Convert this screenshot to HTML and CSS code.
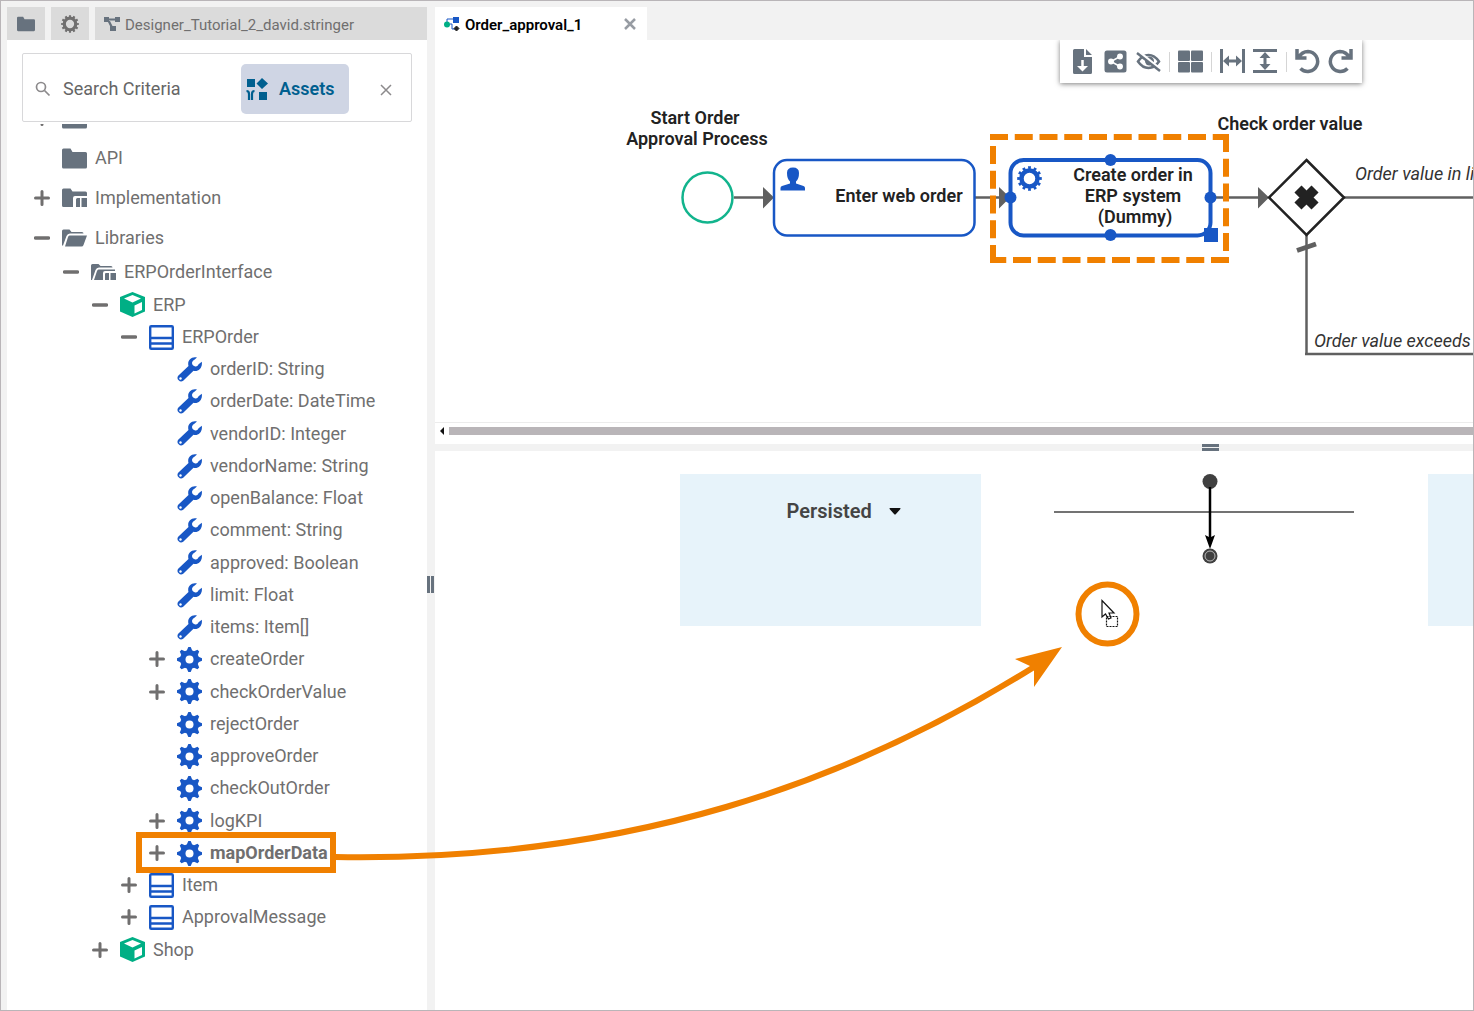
FILE: index.html
```
<!DOCTYPE html>
<html lang="en">
<head>
    <meta charset="UTF-8">
    <meta name="viewport" content="width=device-width, initial-scale=1.0">
    <title>Order_approval_1 - Designer</title>
    <link rel="stylesheet" href="styles.css">
</head>
<body>
    <!-- Shared icons -->
    <svg class="sprite" aria-hidden="true">
        <symbol id="i-plus" viewBox="0 0 16 16"><path d="M8 1.500v13M1.500 8h13" stroke="currentColor" stroke-width="3" stroke-linecap="round"/></symbol>
        <symbol id="i-minus" viewBox="0 0 16 16"><path d="M1.500 8h13" stroke="currentColor" stroke-width="3.500" stroke-linecap="round"/></symbol>
        <symbol id="i-folder" viewBox="0 0 25 25"><path d="M0 4q0-1.500 1.500-1.500h7l2 3.500H23.500q1.500 0 1.500 1.500V21q0 1.500-1.500 1.500h-22Q0 22.500 0 21z" fill="currentColor"/></symbol>
        <symbol id="i-package" viewBox="0 0 25 25">
            <path d="M0 4q0-1.500 1.500-1.500h7l2 3H23.500q1.500 0 1.500 1.500v3H13q-2 0-2 2v9H1.500Q0 21 0 19.500z" fill="currentColor"/>
            <path d="M14 13.500q0-1.500 1.500-1.500H18v9h-4zM19.500 12H25v9h-5.500z" fill="currentColor"/>
        </symbol>
        <symbol id="i-folder-open" viewBox="0 0 25 25">
            <path d="M0 5q0-1.500 1.500-1.500h6l2 2.500H20q1.500 0 1.500 1.500H8Q5.500 7.500 4.500 10L1 19.500H0z" fill="currentColor"/>
            <path d="M7.500 9.500H25L21.500 19q-.5 1.500-2 1.500H3L6 11q.5-1.500 1.500-1.500z" fill="currentColor"/>
        </symbol>
        <symbol id="i-package-open" viewBox="0 0 25 25">
            <path d="M0 5.500Q0 4 1.500 4h6l2 2H20q1.500 0 1.500 1.500H8Q5.500 7.500 4.500 10L1 20H0z" fill="currentColor"/>
            <path d="M7.500 9.500H24V11H14q-2 0-2 2v7H3L6 11q.5-1.500 1.500-1.500z" fill="currentColor"/>
            <path d="M14 14q0-1 1-1h3v7h-4zM19.500 13H25v7h-5.500z" fill="currentColor"/>
        </symbol>
        <symbol id="i-cube" viewBox="0 0 25 25">
            <path d="M12.500 0 25 5v14.500l-12.500 5.500L0 19.500V5z" fill="#00af85"/>
            <path d="M12.500 3 21 6.500l-8.500 4L4 6.500zM22 10v8l-7.500 3.500v-8z" fill="#fff"/>
        </symbol>
        <symbol id="i-class" viewBox="0 0 25 25">
            <rect x="1.200" y="1.200" width="22.600" height="22.600" rx="1" fill="#fff" stroke="currentColor" stroke-width="2.400"/>
            <path d="M1 13h23M1 18.500h23" stroke="currentColor" stroke-width="2.400"/>
        </symbol>
        <symbol id="i-wrench" viewBox="0 0 25 25">
            <path d="M20 .5C14-1 10 4 11.500 9L1.200 18.800a3.600 3.600 0 0 0 5 5L16.500 13.800C21 15 25.800 11 24.800 4.800l-3.200 2.500a3.400 3.400 0 1 1-4.200-4.500z" fill="currentColor"/>
            <circle cx="3.500" cy="21.500" r="1.200" fill="#fff"/>
        </symbol>
        <symbol id="i-cog" viewBox="0 0 25 25">
            <g fill="currentColor">
                <path id="cog-bar" d="M11.300 0h2.400l1.700 4v17l-1.700 4h-2.400l-1.700-4V4z"/>
                <use href="#cog-bar" transform="rotate(45 12.500 12.500)"/>
                <use href="#cog-bar" transform="rotate(90 12.500 12.500)"/>
                <use href="#cog-bar" transform="rotate(135 12.500 12.500)"/>
                <circle cx="12.500" cy="12.500" r="9.500"/>
            </g>
            <circle cx="12.500" cy="12.500" r="4" fill="#fff"/>
        </symbol>
        <symbol id="i-gear" viewBox="0 0 25 25">
            <g fill="none" stroke="currentColor">
                <circle cx="12.500" cy="12.500" r="8" stroke-width="4.500"/>
                <circle cx="12.500" cy="12.500" r="10.800" stroke-width="3" pathLength="24" stroke-dasharray="1 1" stroke-dashoffset=".5"/>
            </g>
        </symbol>
    </svg>

    <div class="app">
        <aside class="sidebar">
            <div class="side-tabs">
                <button class="side-tab square" aria-label="Files"><svg width="18" height="18"><use href="#i-folder"/></svg></button>
                <button class="side-tab square warm" aria-label="Settings"><svg width="18" height="18"><use href="#i-gear"/></svg></button>
                <button class="side-tab wide">
                    <svg width="16" height="16" viewBox="0 0 16 16"><path d="M0 1h5v5H0zM11 1h5v5h-5zM6 10h6v5H6zM5 2.500h6v2H5zM3.500 5h2.500l3 6H6.500z" fill="#67727e"/></svg>
                    <span class="tab-text">Designer_Tutorial_2_david.stringer</span>
                </button>
            </div>

            <div class="explorer">
                <form class="search">
                    <svg class="search-icon" width="16" height="16" viewBox="0 0 16 16" fill="none" stroke="#8c8a8c" stroke-width="1.700"><circle cx="6" cy="6" r="4.500"/><path d="m9.500 9.500 5 5"/></svg>
                    <input class="search-input" type="text" aria-label="Search Criteria" placeholder="Search Criteria">
                    <button class="chip" type="button">
                        <svg width="22" height="22" viewBox="0 0 22 22" fill="currentColor"><path d="M1 1h8v8H1zM16 0l6 5.500-6 5.500-5.500-5.500zM13 14h8v8h-8z"/><path d="M.5 13q2.500 0 2.500 3v6M8.500 13Q6 13 6 16v6" fill="none" stroke="currentColor" stroke-width="2.200"/></svg>
                        <span>Assets</span>
                    </button>
                    <button class="clear" type="reset" aria-label="Clear"><svg width="12" height="12" viewBox="0 0 12 12" stroke="#8c8a8c" stroke-width="1.500"><path d="m1 1 10 10M11 1 1 11"/></svg></button>
                </form>

                <div class="tree">
                    <ul class="folders">
                        <li class="row"><button class="toggle" aria-label="Expand"><svg><use href="#i-plus"/></svg></button><svg class="icon"><use href="#i-folder"/></svg></li>
                        <li class="row"><span class="toggle"></span><svg class="icon"><use href="#i-folder"/></svg><span>API</span></li>
                        <li class="row"><button class="toggle" aria-label="Expand"><svg><use href="#i-plus"/></svg></button><svg class="icon"><use href="#i-package"/></svg><span>Implementation</span></li>
                        <li class="row"><button class="toggle" aria-label="Collapse"><svg><use href="#i-minus"/></svg></button><svg class="icon"><use href="#i-folder-open"/></svg><span>Libraries</span></li>
                    </ul>
                    <ul class="library">
                        <li class="row level-1"><button class="toggle" aria-label="Collapse"><svg><use href="#i-minus"/></svg></button><svg class="icon"><use href="#i-package-open"/></svg><span>ERPOrderInterface</span></li>
                        <li class="row level-2"><button class="toggle" aria-label="Collapse"><svg><use href="#i-minus"/></svg></button><svg class="icon"><use href="#i-cube"/></svg><span>ERP</span></li>
                        <li class="row level-3"><button class="toggle" aria-label="Collapse"><svg><use href="#i-minus"/></svg></button><svg class="icon blue"><use href="#i-class"/></svg><span>ERPOrder</span></li>
                        <li class="row level-4"><span class="toggle"></span><svg class="icon blue"><use href="#i-wrench"/></svg><span>orderID: String</span></li>
                        <li class="row level-4"><span class="toggle"></span><svg class="icon blue"><use href="#i-wrench"/></svg><span>orderDate: DateTime</span></li>
                        <li class="row level-4"><span class="toggle"></span><svg class="icon blue"><use href="#i-wrench"/></svg><span>vendorID: Integer</span></li>
                        <li class="row level-4"><span class="toggle"></span><svg class="icon blue"><use href="#i-wrench"/></svg><span>vendorName: String</span></li>
                        <li class="row level-4"><span class="toggle"></span><svg class="icon blue"><use href="#i-wrench"/></svg><span>openBalance: Float</span></li>
                        <li class="row level-4"><span class="toggle"></span><svg class="icon blue"><use href="#i-wrench"/></svg><span>comment: String</span></li>
                        <li class="row level-4"><span class="toggle"></span><svg class="icon blue"><use href="#i-wrench"/></svg><span>approved: Boolean</span></li>
                        <li class="row level-4"><span class="toggle"></span><svg class="icon blue"><use href="#i-wrench"/></svg><span>limit: Float</span></li>
                        <li class="row level-4"><span class="toggle"></span><svg class="icon blue"><use href="#i-wrench"/></svg><span>items: Item[]</span></li>
                        <li class="row level-4"><button class="toggle" aria-label="Expand"><svg><use href="#i-plus"/></svg></button><svg class="icon blue"><use href="#i-cog"/></svg><span>createOrder</span></li>
                        <li class="row level-4"><button class="toggle" aria-label="Expand"><svg><use href="#i-plus"/></svg></button><svg class="icon blue"><use href="#i-cog"/></svg><span>checkOrderValue</span></li>
                        <li class="row level-4"><span class="toggle"></span><svg class="icon blue"><use href="#i-cog"/></svg><span>rejectOrder</span></li>
                        <li class="row level-4"><span class="toggle"></span><svg class="icon blue"><use href="#i-cog"/></svg><span>approveOrder</span></li>
                        <li class="row level-4"><span class="toggle"></span><svg class="icon blue"><use href="#i-cog"/></svg><span>checkOutOrder</span></li>
                        <li class="row level-4"><button class="toggle" aria-label="Expand"><svg><use href="#i-plus"/></svg></button><svg class="icon blue"><use href="#i-cog"/></svg><span>logKPI</span></li>
                        <li class="row level-4 selected"><button class="toggle" aria-label="Expand"><svg><use href="#i-plus"/></svg></button><svg class="icon blue"><use href="#i-cog"/></svg><span>mapOrderData</span></li>
                        <li class="row level-3"><button class="toggle" aria-label="Expand"><svg><use href="#i-plus"/></svg></button><svg class="icon blue"><use href="#i-class"/></svg><span>Item</span></li>
                        <li class="row level-3"><button class="toggle" aria-label="Expand"><svg><use href="#i-plus"/></svg></button><svg class="icon blue"><use href="#i-class"/></svg><span>ApprovalMessage</span></li>
                        <li class="row level-2"><button class="toggle" aria-label="Expand"><svg><use href="#i-plus"/></svg></button><svg class="icon"><use href="#i-cube"/></svg><span>Shop</span></li>
                    </ul>
                </div>
            </div>
        </aside>

        <div class="splitter-v"><span class="grip-v"></span></div>

        <main class="editor">
            <div class="editor-tabs">
                <div class="editor-tab">
                    <svg width="16" height="16" viewBox="0 0 16 16"><path d="M3 8V3h7M6 8h2v5h4" fill="none" stroke="#1857c5" stroke-width="1"/><circle cx="3" cy="8.500" r="3" fill="#00af85"/><path d="M9 1h6v6H9z" fill="#1857c5"/><path d="m12.500 10 2.500 2.500-2.500 2.500-2.500-2.500z" fill="#222" stroke="#222"/></svg>
                    <span class="tab-text">Order_approval_1</span>
                    <button class="tab-close" aria-label="Close tab"><svg width="12" height="12" viewBox="0 0 12 12" stroke="#979ca3" stroke-width="2.500"><path d="m1 1 10 10M11 1 1 11"/></svg></button>
                </div>
            </div>

            <section class="canvas">
                <svg class="diagram" width="100%" height="100%">
                    <!-- flows -->
                    <g fill="none" stroke="#606060" stroke-width="2.500">
                        <path d="M299 157.500h32M540 157.500h28M777 157.500h50"/>
                        <line x1="909" y1="157.500" x2="100%" y2="157.500"/>
                        <path d="M871.500 195v119"/>
                        <line x1="870" y1="314" x2="100%" y2="314"/>
                        <path d="m862 210.500 19-6.500" stroke-width="5"/>
                    </g>
                    <path d="M328 147l11 10.500-11 11zM564 147l11 10.500-11 11zM823 147l11 10.500-11 11z" fill="#606060"/>

                    <circle cx="272.500" cy="157.500" r="25" fill="#fff" stroke="#12b48d" stroke-width="2.500"/>
                    <text class="name" x="260" y="84">Start Order</text>
                    <text class="name" x="262" y="105">Approval Process</text>

                    <rect x="339" y="120" width="200.500" height="75.500" rx="13" fill="#fff" stroke="#1857c5" stroke-width="2.500"/>
                    <path d="M352 133q0-5.500 6-5.500t6 5.500q0 6-3 8.500v2l7.500 2.500q1.500.5 1.500 2v2.500h-24.500V148q0-1.500 1.500-2l8-2.500v-2q-3-2.500-3-8.500z" fill="#1857c5"/>
                    <text class="name" x="464" y="162">Enter web order</text>

                    <rect x="575.500" y="120" width="200" height="75.500" rx="13" fill="#fff" stroke="#1857c5" stroke-width="4"/>
                    <svg x="582" y="126" width="25" height="25" color="#1857c5"><use href="#i-gear"/></svg>
                    <g fill="#1857c5">
                        <circle cx="675.500" cy="120" r="6"/>
                        <circle cx="675.500" cy="195" r="6"/>
                        <circle cx="575.500" cy="157.500" r="6"/>
                        <circle cx="775.500" cy="157.500" r="6"/>
                        <path d="M769 188h14v14h-14z"/>
                    </g>
                    <text class="name" x="698" y="141">Create order in</text>
                    <text class="name" x="698" y="162">ERP system</text>
                    <text class="name" x="700" y="183">(Dummy)</text>

                    <path d="m871.500 120 37.500 37.500-37.500 37.500-37.500-37.500z" fill="#fff" stroke="#222" stroke-width="2.500"/>
                    <path d="m866.500 152.500 10 10M876.500 152.500l-10 10" stroke="#222" stroke-width="10" stroke-linecap="square"/>
                    <text class="name" x="855" y="90">Check order value</text>
                    <text class="flow" x="920" y="140">Order value in li</text>
                    <text class="flow" x="879" y="307">Order value exceeds</text>
                </svg>

                <div class="toolbar">
                    <button aria-label="Export"><svg viewBox="0 0 25 25"><path d="M3 1.500Q3 0 4.500 0H14v8h8v15.500q0 1.500-1.500 1.500h-16Q3 25 3 23.500zM16 0l6 6h-6z" fill="currentColor"/><path d="M12.500 11v8" stroke="#fff" stroke-width="2.500"/><path d="M7 17h11l-5.500 5.500z" fill="#fff"/></svg></button>
                    <button aria-label="Share"><svg viewBox="0 0 25 25"><rect x="1.500" y="1.500" width="22" height="22" rx="2.500" fill="currentColor"/><g fill="#fff" stroke="#fff" stroke-width="1.500"><path d="M17 7.500 8 12.500l9 5" fill="none"/><circle cx="17" cy="7.500" r="2.200"/><circle cx="8" cy="12.500" r="2.200"/><circle cx="17" cy="17.500" r="2.200"/></g></svg></button>
                    <button aria-label="Hide"><svg viewBox="0 0 25 25"><path d="M2 12.500Q6.500 6 12.500 6T23 12.500Q18.500 19 12.500 19T2 12.500z" fill="none" stroke="currentColor" stroke-width="2.500"/><circle cx="13.500" cy="12" r="4.500" fill="currentColor"/><path d="M2 2.200 25 21" stroke="#fff" stroke-width="3"/><path d="M1 4 24 22" stroke="currentColor" stroke-width="2.500"/></svg></button>
                    <span class="sep"></span>
                    <button aria-label="Layout"><svg viewBox="0 0 25 25" fill="currentColor"><rect y="1.500" width="12" height="10.500" rx="1"/><rect x="13" y="1.500" width="12" height="10.500" rx="1"/><rect y="13" width="12" height="10.500" rx="1"/><rect x="13" y="13" width="12" height="10.500" rx="1"/></svg></button>
                    <span class="sep"></span>
                    <button aria-label="Horizontal space"><svg viewBox="0 0 25 25"><path d="M1.500 0v24M23.500 0v24M5 12h15" stroke="currentColor" stroke-width="3"/><path d="m3 12 6-5.500v11zM22 12l-6-5.500v11z" fill="currentColor"/></svg></button>
                    <button aria-label="Vertical space"><svg viewBox="0 0 25 25"><path d="M0 1.500h24M0 22.500h24M12 5v14" stroke="currentColor" stroke-width="3"/><path d="m12 3 5.500 6h-11zM12 21l5.500-6h-11z" fill="currentColor"/></svg></button>
                    <span class="sep"></span>
                    <button aria-label="Undo"><svg viewBox="0 0 25 25" fill="none" stroke="currentColor" stroke-width="3.500"><path d="M2 0v9h9.500M3 9Q7 2.500 13 2.500a10 10 0 1 1-7.500 17"/></svg></button>
                    <button aria-label="Redo"><svg viewBox="0 0 25 25" fill="none" stroke="currentColor" stroke-width="3.500"><path d="M23 0v9h-9.500M22 9Q18 2.500 12 2.500a10 10 0 1 0 7.500 17"/></svg></button>
                </div>
            </section>

            <div class="scrollbar">
                <svg width="6" height="8" viewBox="0 0 6 8"><path d="M5 0v8L1 4z" fill="#111"/></svg>
                <span class="thumb"></span>
            </div>
            <div class="splitter-h"><span class="grip-h"></span></div>

            <section class="mapping">
                <div class="block persisted">
                    <select class="state" aria-label="State">
                        <option>Persisted</option>
                    </select>
                    <svg width="12" height="7" viewBox="0 0 12 7"><path d="M1 0h10q1 .5 0 1.500L6.500 6.500h-1L1 1.500Q0 .5 1 0z" fill="#111"/></svg>
                </div>
                <div class="block">
                    <svg width="301" height="152">
                        <path d="M0 38h300" stroke="#444" stroke-width="1.500"/>
                        <circle cx="156" cy="7.500" r="7.500" fill="#404040"/>
                        <path d="M156 13v52" stroke="#000" stroke-width="2.500"/>
                        <path d="m151 61 5 2.500 5-2.500-5 14z"/>
                        <circle cx="156" cy="82" r="7.500" fill="#404040"/>
                        <circle cx="156" cy="82" r="5" fill="none" stroke="#bbb"/>
                    </svg>
                </div>
                <div class="block filled"></div>
            </section>
        </main>

        <!-- Tutorial callouts drawn over the whole workspace -->
        <svg class="callouts" width="100%" height="100%" fill="none" stroke="#f08000" stroke-width="6">
            <rect x="139" y="835" width="194" height="35"/>
            <path d="M335 857C630 862 850 782 1034 667"/>
            <path d="m1062 647-47 12 15 7 4 4v17z" fill="#f08000" stroke="none"/>
            <path d="M990 137h239M1226 134v129M1229 260H990M993 263V134" stroke-dasharray="18 6.750"/>
            <ellipse cx="1107.500" cy="614" rx="29" ry="29.500"/>
            <g stroke="#111" stroke-width="1.200">
                <path d="M1102 600.500v16.500l3.500-3 3 5 2.500-1-2-5h5z" fill="#fff"/>
                <path d="M1106.500 616.500h11v10h-11z" stroke-dasharray="2 1"/>
            </g>
        </svg>
    </div>
</body>
</html>
```
FILE: styles.css
```
* {
    box-sizing: border-box;
}

body {
    margin: 0;
    font-family: Roboto, "Liberation Sans", sans-serif;
    font-size: 18px;
    color: #706f6f;
}

button {
    font: inherit;
    color: inherit;
    background: none;
    border: 0;
    padding: 0;
    cursor: pointer;
}

ul {
    list-style: none;
    margin: 0;
    padding: 0;
}

svg {
    display: block;
    flex: none;
}

.sprite {
    position: absolute;
    width: 0;
    height: 0;
}

.app {
    position: relative;
    display: flex;
    height: 100vh;
    padding: 6px 0 0 6px;
    background: #f2f2f2;
    border: 1px solid #b9b5b8;
    overflow: hidden;
}

/* Sidebar */
.sidebar {
    display: flex;
    flex-direction: column;
    flex: 0 0 420px;
    min-width: 0;
}

.side-tabs {
    display: flex;
    gap: 6px;
    height: 33px;
}

.side-tab {
    display: flex;
    align-items: center;
    background: #dbdbdb;
    color: #67727e;
}

.side-tab.square {
    width: 38px;
    justify-content: center;
}

.side-tab.warm {
    color: #706f6f;
}

.side-tab.wide {
    flex: 1;
    gap: 5px;
    padding-left: 9px;
    font-size: 15px;
    color: #706f6f;
}

.tab-text {
    padding-top: 2px;
}

.explorer {
    display: flex;
    flex-direction: column;
    flex: 1;
    min-height: 0;
    background: #fff;
}

.search {
    display: flex;
    align-items: center;
    height: 69px;
    margin: 13px 15px 2px;
    padding: 2px 12px 0;
    border: 1px solid #d8d8da;
    border-radius: 2px;
}

.search-input {
    flex: 1;
    min-width: 0;
    margin-left: 12px;
    padding: 0;
    border: 0;
    outline: 0;
    font: inherit;
    color: #666;
}

.search-input::placeholder {
    color: #666;
    opacity: 1;
}

.chip {
    display: flex;
    align-items: center;
    gap: 11px;
    width: 108px;
    height: 50px;
    padding-left: 5px;
    border-radius: 5px;
    background: #cfd5e4;
    color: #005f8f;
    font-weight: 600;
}

.clear {
    margin: 2px 7px 0 31px;
}

/* Tree */
.tree {
    flex: 1;
    min-height: 0;
    overflow: hidden;
}

.folders {
    margin-top: -26px;
}

.row {
    display: flex;
    align-items: center;
    height: 32px;
    padding-left: 27px;
    line-height: 24px;
}

.folders .row {
    height: 40px;
}

.library {
    margin-top: -2px;
}

.library .row:nth-child(4n+2) {
    height: 33px;
}

.level-1.row { padding-left: 56px; }
.level-2.row { padding-left: 85px; }
.level-3.row { padding-left: 114px; }
.level-4.row { padding-left: 142px; }

.toggle,
.toggle svg {
    width: 16px;
    height: 16px;
}

.icon {
    width: 25px;
    height: 25px;
    margin: 0 8px 0 12px;
    color: #67727e;
}

.icon.blue {
    color: #1857c5;
}

.selected {
    font-weight: 700;
}

/* Splitters */
.splitter-v {
    display: flex;
    align-items: center;
    flex: 0 0 8px;
}

.grip-v {
    width: 7px;
    height: 17px;
    margin-top: 152px;
    border: solid #67727e;
    border-width: 0 3px;
}

.splitter-h {
    display: flex;
    justify-content: center;
    flex: 0 0 7px;
    padding-left: 512px;
}

.grip-h {
    width: 17px;
    height: 7px;
    border: solid #67727e;
    border-width: 3px 0;
}

/* Editor */
.editor {
    display: flex;
    flex-direction: column;
    flex: 1;
    min-width: 0;
}

.editor-tabs {
    display: flex;
    height: 33px;
}

.editor-tab {
    display: flex;
    align-items: center;
    gap: 5px;
    width: 212px;
    padding: 0 11px 0 9px;
    background: #fff;
    color: #000;
    font-size: 15px;
    font-weight: 600;
}

.tab-close {
    margin-left: auto;
}

.canvas {
    position: relative;
    height: 382px;
    background: #fff;
}

.diagram {
    overflow: hidden;
}

.name {
    fill: #222;
    font-weight: 600;
    text-anchor: middle;
}

.flow {
    fill: #333;
    font-style: italic;
}

.toolbar {
    position: absolute;
    top: 0;
    right: 111px;
    display: flex;
    align-items: center;
    gap: 8px;
    height: 43px;
    padding: 0 9px 0 10px;
    background: #fff;
    color: #67727e;
    box-shadow: 0 1px 5px rgba(0, 0, 0, 0.5);
    clip-path: inset(0 -8px -8px -8px);
}

.toolbar svg {
    width: 25px;
    height: 25px;
}

.sep {
    width: 1px;
    height: 20px;
    background: #d5d5d5;
}

.scrollbar {
    display: flex;
    align-items: center;
    gap: 4px;
    height: 22px;
    padding: 0 0 5px 4px;
    background: #fff;
    border-top: 1px solid #ececec;
}

.thumb {
    flex: 1;
    height: 8px;
    background: #b9b5b8;
}

/* Data mapping */
.mapping {
    display: flex;
    flex: 1;
    gap: 73px;
    min-height: 0;
    padding: 23px 0 0 245px;
    background: #fff;
    overflow: hidden;
}

.block {
    flex: 0 0 301px;
    height: 152px;
}

.persisted,
.filled {
    background: #e7f3fa;
}

.persisted {
    display: flex;
    align-items: center;
    justify-content: center;
    gap: 16px;
    padding: 0 0 78px 26px;
}

.state {
    appearance: none;
    padding: 0;
    border: 0;
    background: none;
    font: inherit;
    font-size: 20px;
    font-weight: 600;
    color: #444;
}

.callouts {
    position: absolute;
    top: -1px;
    left: -1px;
    pointer-events: none;
    overflow: visible;
}
```
